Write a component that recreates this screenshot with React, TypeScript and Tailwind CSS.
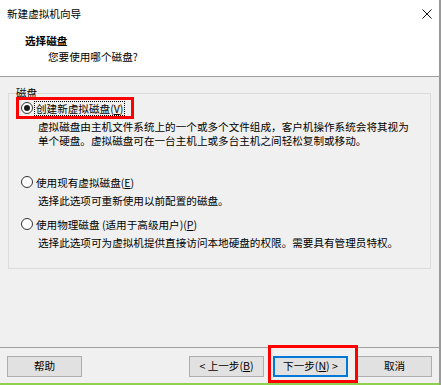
import React from 'react';

const font = { fontFamily: '"Noto Sans CJK SC", "Noto Sans", sans-serif' };

function Radio({ checked }: { checked?: boolean }) {
  return (
    <span className="flex h-[12px] w-[12px] shrink-0 items-center justify-center rounded-full border border-[#333333] bg-white">
      {checked && <span className="h-[6px] w-[6px] rounded-full bg-[#1a1a1a]" />}
    </span>
  );
}

function Option({
  label,
  hotkey,
  checked,
  marked,
  children,
}: {
  label: string;
  hotkey: string;
  checked?: boolean;
  marked?: boolean;
  children: React.ReactNode;
}) {
  return (
    <div>
      <div
        className={
          'ml-[7px] inline-flex h-[22px] items-center border-[3px] pl-[2px] pr-[6px] ' +
          (marked ? 'border-[#ff0000]' : 'border-transparent')
        }
      >
        <Radio checked={checked} />
        <span
          className={
            'ml-[1px] border px-[1px] leading-[13px] ' +
            (checked ? 'border-dotted border-black' : 'border-transparent')
          }
        >
          {label}(<span className="underline">{hotkey}</span>)
        </span>
      </div>
      <p className="ml-[29px] mt-[1px] leading-[14px]">{children}</p>
    </div>
  );
}

function Button({ children, primary }: { children: React.ReactNode; primary?: boolean }) {
  return (
    <button
      className={
        'flex h-[21px] w-[75px] items-center justify-center bg-[#e1e1e1] leading-none text-black ' +
        (primary ? 'border-2 border-[#0078d7]' : 'border border-[#adadad]')
      }
    >
      {children}
    </button>
  );
}

export default function App() {
  return (
    <div
      className="flex h-[385px] w-[441px] flex-col border-r-2 border-[#9a9a9a] bg-[#f0f0f0] text-[10.6px] text-black"
      style={font}
    >
      {/* header */}
      <div className="h-[77px] shrink-0 border-b border-[#a0a0a0] bg-white">
        <div className="flex items-center justify-between pl-[7px] pr-[7px] pt-[7px] leading-[14px]">
          <span>新建虚拟机向导</span>
          <svg width="10" height="10" viewBox="0 0 10 10" className="mt-[-1px]">
            <path d="M0.5 0.5 L9.5 9.5 M9.5 0.5 L0.5 9.5" stroke="#111" strokeWidth="1" />
          </svg>
        </div>
        <div className="ml-[25px] mt-[13px] font-bold leading-[14px]">选择磁盘</div>
        <div className="ml-[48px] mt-[2px] leading-[14px]">您要使用哪个磁盘?</div>
      </div>

      {/* body */}
      <div className="flex-1 px-[8px] pt-[9px]">
        <fieldset className="border border-[#dcdcdc] pb-[18px]">
          <legend className="ml-[7px] leading-[14px]">磁盘</legend>
          <div className="-mt-[3px]">
            <Option label="创建新虚拟磁盘" hotkey="V" checked marked>
              虚拟磁盘由主机文件系统上的一个或多个文件组成，客户机操作系统会将其视为
              <br />
              单个硬盘。虚拟磁盘可在一台主机上或多台主机之间轻松复制或移动。
            </Option>
          </div>
          <div className="mt-[23px]">
            <Option label="使用现有虚拟磁盘" hotkey="E">
              选择此选项可重新使用以前配置的磁盘。
            </Option>
          </div>
          <div className="mt-[5px]">
            <Option label="使用物理磁盘 (适用于高级用户)" hotkey="P">
              选择此选项可为虚拟机提供直接访问本地硬盘的权限。需要具有管理员特权。
            </Option>
          </div>
        </fieldset>
      </div>

      {/* footer */}
      <div className="flex shrink-0 items-center border-t border-[#a0a0a0] px-[7px] pb-[6px] pt-[8px]">
        <Button>帮助</Button>
        <div className="flex-1" />
        <div className="flex gap-[9px]">
          <Button>
            &lt; 上一步(<span className="underline">B</span>)
          </Button>
          <div className="relative">
            <Button primary>
              下一步(<span className="underline">N</span>) &gt;
            </Button>
            <span className="pointer-events-none absolute -bottom-[6px] -left-[5px] -right-[10px] -top-[11px] border-[3px] border-[#ff0000]" />
          </div>
          <Button>取消</Button>
        </div>
      </div>
      <div className="h-[2px] shrink-0 bg-[#8fd14f]" />
    </div>
  );
}
